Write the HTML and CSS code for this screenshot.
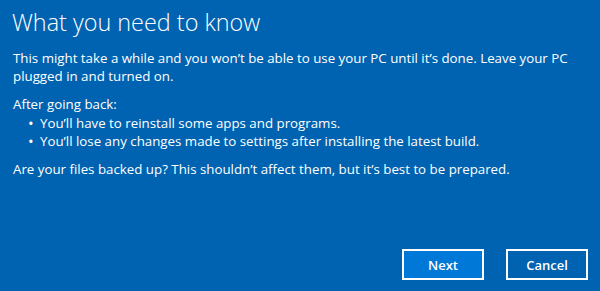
FILE: index.html
```html
<!DOCTYPE html>
<html lang="en">
<head>
<meta charset="utf-8">
<title>What you need to know</title>
<link rel="stylesheet" href="styles.css">
</head>
<body>
<div class="dialog">
  <h1 class="title">What you need to know</h1>
  <p class="para">This might take a while and you won’t be able to use your PC until it’s done. Leave your PC plugged in and turned on.</p>
  <p class="para lead">After going back:</p>
  <ul class="list">
    <li>You’ll have to reinstall some apps and programs.</li>
    <li>You’ll lose any changes made to settings after installing the latest build.</li>
  </ul>
  <p class="para">Are your files backed up? This shouldn’t affect them, but it’s best to be prepared.</p>
  <div class="actions">
    <button class="btn primary">Next</button>
    <button class="btn">Cancel</button>
  </div>
</div>
</body>
</html>
```
FILE: styles.css
```css
html, body {
  margin: 0;
  padding: 0;
  background: #0063b1;
}
.dialog {
  box-sizing: border-box;
  width: 600px;
  height: 291px;
  padding: 7px 12px 11px 13px;
  display: flex;
  flex-direction: column;
  color: #fff;
  font-family: "Open Sans", "Noto Sans", sans-serif;
  font-size: 13.3px;
  line-height: 18px;
}
.title {
  margin: 0 0 12px -1px;
  font-weight: 300;
  font-size: 23.4px;
  line-height: 30px;
}
.para {
  margin: 0 0 10px 0;
}
.lead {
  margin-bottom: 1px;
}
.list {
  margin: 0 0 10px 0;
  padding-left: 27px;
  list-style: none;
}
.list li {
  position: relative;
}
.list li::before {
  content: "•";
  position: absolute;
  left: -12px;
  font-size: 15px;
}
.actions {
  margin-top: auto;
  display: flex;
  justify-content: flex-end;
  gap: 22px;
}
.btn {
  box-sizing: border-box;
  width: 82px;
  height: 31px;
  border: 2px solid #fff;
  background: #0063b1;
  color: #fff;
  font-family: inherit;
  font-size: 13px;
  font-weight: 600;
  padding: 0;
}
.primary {
  background: #0078d7;
}
```
